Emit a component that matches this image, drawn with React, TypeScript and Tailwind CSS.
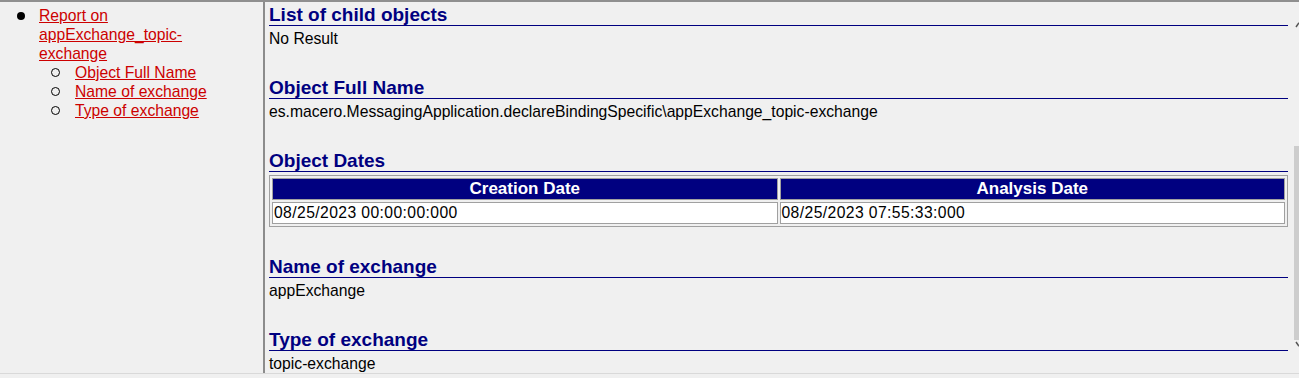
const NAVY = 'text-[#000080]';

function Section({ title, children }: { title: string; children: React.ReactNode }) {
  return (
    <section className="mb-[31px]">
      <h2 className={`h-[20px] border-b border-[#000080] text-[19px] leading-[18px] font-bold ${NAVY}`}>{title}</h2>
      <div className="mt-[3px] leading-[19px]">{children}</div>
    </section>
  );
}

function SubItem({ label }: { label: string }) {
  return (
    <li className="flex h-[19px] items-center">
      <span className="flex w-[75px] shrink-0 pl-[51px]">
        <span className="h-[9px] w-[9px] rounded-full border-[1.5px] border-black" />
      </span>
      <a href="#" className="leading-[19px] text-[#cc0000] underline">{label}</a>
    </li>
  );
}

function Scrollbar() {
  return (
    <div className="flex w-[8px] shrink-0 flex-col">
      <svg width="8" height="7" viewBox="0 0 8 7" className="mt-[20px]">
        <path d="M5 5 L7.5 1.5 L8 2" fill="none" stroke="#555" strokeWidth="1.5" />
      </svg>
      <div className="ml-[3px] mt-[117px] h-[194px] w-[5px] bg-[#cdcdcd]" />
      <svg width="8" height="7" viewBox="0 0 8 7" className="mt-[1px]">
        <path d="M5 1 L7.5 4.5 L8 4" fill="none" stroke="#555" strokeWidth="1.5" />
      </svg>
    </div>
  );
}

export default function App() {
  return (
    <div className="h-[378px] w-[1299px] overflow-hidden bg-[#f0f0f0] font-['Liberation_Sans',Arial,sans-serif] text-[15.7px] text-black">
      <div className="flex h-[374px] border-t-2 border-b border-t-[#8f8f8f] border-b-[#d9d9d9]">
        {/* left frame: table of contents */}
        <nav className="w-[263px] shrink-0 pt-[4px]">
          <ul>
            <li className="flex">
              <span className="flex h-[19px] w-[39px] shrink-0 items-center pl-[17px]">
                <span className="h-[8px] w-[8px] rounded-full bg-black" />
              </span>
              <a href="#" className="leading-[19px] text-[#cc0000] underline">
                Report on
                <br />
                appExchange_topic-
                <br />
                exchange
              </a>
            </li>
            <SubItem label="Object Full Name" />
            <SubItem label="Name of exchange" />
            <SubItem label="Type of exchange" />
          </ul>
        </nav>

        {/* right frame: report body */}
        <main className="flex flex-1 border-l-2 border-[#8c8c8c]">
          <div className="flex-1 pl-[4px] pr-[3px] pt-[4px]">
            <Section title="List of child objects">No Result</Section>
            <Section title="Object Full Name">
              es.macero.MessagingApplication.declareBindingSpecific\appExchange_topic-exchange
            </Section>
            <Section title="Object Dates">
              <table className="w-full table-fixed border-separate border-spacing-[2px] border border-[#a0a0a0]">
                <thead>
                  <tr>
                    <th className="h-[22px] border border-[#a0a0a0] bg-[#000080] p-0 text-center text-[17px] font-bold leading-[20px] text-white">Creation Date</th>
                    <th className="h-[22px] border border-[#a0a0a0] bg-[#000080] p-0 text-center text-[17px] font-bold leading-[20px] text-white">Analysis Date</th>
                  </tr>
                </thead>
                <tbody>
                  <tr>
                    <td className="h-[22px] border border-[#a0a0a0] bg-white px-[1px] py-0 leading-[20px] tracking-[0.4px]">08/25/2023 00:00:00:000</td>
                    <td className="h-[22px] border border-[#a0a0a0] bg-white px-[1px] py-0 leading-[20px] tracking-[0.4px]">08/25/2023 07:55:33:000</td>
                  </tr>
                </tbody>
              </table>
            </Section>
            <Section title="Name of exchange">appExchange</Section>
            <Section title="Type of exchange">topic-exchange</Section>
          </div>
          <Scrollbar />
        </main>
      </div>
    </div>
  );
}
